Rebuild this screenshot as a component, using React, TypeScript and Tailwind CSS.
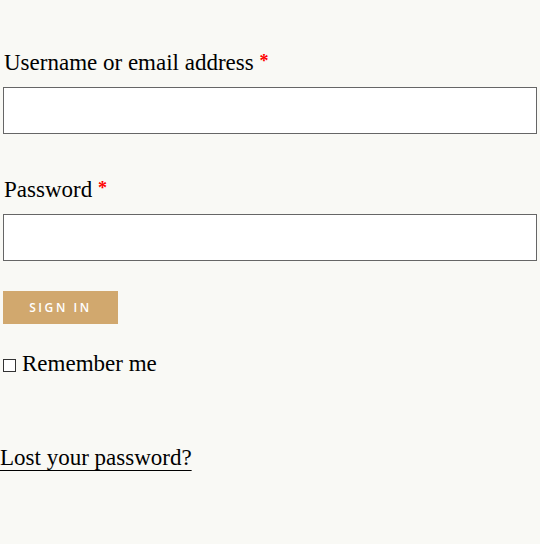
export default function App() {
  return (
    <main className="min-h-[544px] w-[540px] bg-[#f9f9f5] pt-[48px] text-black font-['Liberation_Serif',serif]">
      <form className="ml-[3px] mr-[3px] flex flex-col">
        <label className="mb-[9px] pl-[1px] text-[23px] leading-[30px]">
          Username or email address{' '}
          <span className="relative -top-[3px] text-[18px] leading-none font-bold text-[#ff0000]">*</span>
        </label>
        <input type="text" className="h-[47px] w-full border border-[#666666] bg-white" />

        <label className="mt-[41px] mb-[9px] pl-[1px] text-[23px] leading-[30px]">
          Password{' '}
          <span className="relative -top-[3px] text-[18px] leading-none font-bold text-[#ff0000]">*</span>
        </label>
        <input type="password" className="h-[47px] w-full border border-[#666666] bg-white" />

        <div className="mt-[30px]">
          <button
            type="button"
            className="h-[33px] w-[115px] bg-[#d1a86e] text-[12px] font-semibold tracking-[2.6px] text-white font-['Open_Sans',sans-serif]"
          >
            SIGN IN
          </button>
        </div>

        <label className="mt-[25px] flex items-center gap-[6px] text-[23px] leading-[30px]">
          <span className="mt-[3px] h-[13px] w-[13px] border border-[#333333] bg-white" />
          Remember me
        </label>
      </form>

      <a href="#" className="mt-[64px] block w-fit text-[23px] leading-[30px] underline underline-offset-[5px] decoration-1">
        Lost your password?
      </a>
    </main>
  )
}
